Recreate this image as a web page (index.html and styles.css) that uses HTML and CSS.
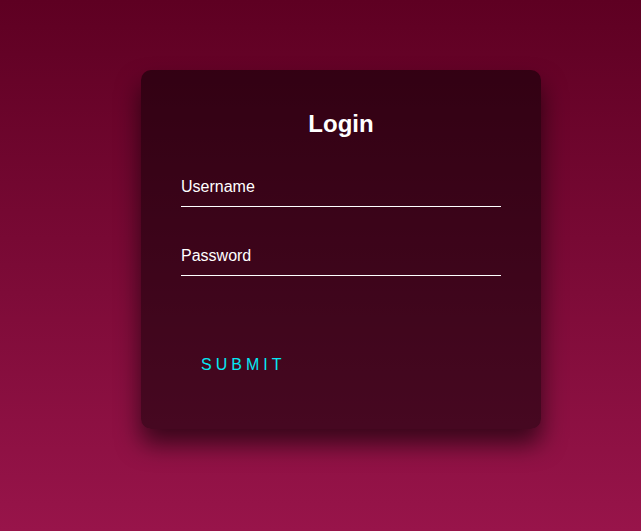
FILE: index.html
```html
<!DOCTYPE html>
<html>
<head>
<meta charset="utf-8">
<link rel="stylesheet" href="styles.css">
</head>
<body>
<div class="login-box">
  <h2>Login</h2>
  <form>
    <div class="user-box">
      <input type="text" name="" required="">
      <label>Username</label>
    </div>
    <div class="user-box">
      <input type="password" name="" required="">
      <label>Password</label>
    </div>
    <a href="#" class="submit">Submit</a>
  </form>
</div>
</body>
</html>
```
FILE: styles.css
```css
html { height: 100%; }
body {
  margin: 0;
  min-height: 100%;
  padding: 70px 0 0 141px;
  box-sizing: border-box;
  font-family: "Liberation Sans", Arial, sans-serif;
  background: linear-gradient(#5e0022, #98144a);
}
.login-box {
  width: 400px;
  padding: 40px 40px 45px;
  box-sizing: border-box;
  background: rgba(0, 0, 0, 0.5);
  box-shadow: 0 15px 25px rgba(0, 0, 0, 0.6);
  border-radius: 10px;
}
.login-box h2 {
  margin: 0 0 30px;
  padding: 0;
  color: #fff;
  text-align: center;
  font-size: 24px;
}
.user-box { position: relative; }
.user-box input {
  display: block;
  width: 100%;
  padding: 10px 0;
  font-size: 16px;
  font-family: inherit;
  color: #fff;
  margin: 0 0 30px;
  border: none;
  border-bottom: 1px solid #fff;
  outline: none;
  background: transparent;
  box-sizing: content-box;
}
.user-box label {
  position: absolute;
  top: 0;
  left: 0;
  padding: 10px 0;
  font-size: 16px;
  color: #fff;
  pointer-events: none;
}
.submit {
  position: relative;
  display: inline-block;
  padding: 10px 20px;
  color: #03e9f4;
  font-size: 16px;
  text-decoration: none;
  text-transform: uppercase;
  margin-top: 40px;
  letter-spacing: 4px;
}
```
